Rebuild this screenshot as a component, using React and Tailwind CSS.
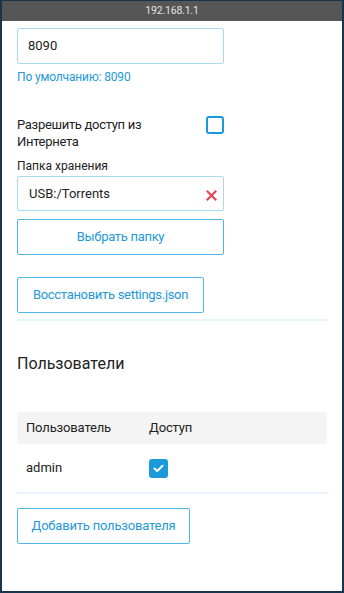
import React from "react";

export default function App() {
  return (
    <div className="w-[344px] h-[593px] bg-[#17354d] pl-[2px] pr-[2px] pt-[1px] pb-[2px] flex flex-col" style={{ fontFamily: "Roboto, 'Noto Sans', sans-serif" }}>
      <div className="h-[20px] bg-[#565656] text-[#e2e2e2] text-[10.5px] tracking-[-0.2px] flex items-center justify-center shrink-0">192.168.1.1</div>
      <div className="flex-1 bg-white pl-[15px] pr-[15px] text-[#222] overflow-hidden">
        <div className="mt-[7px] w-[207px] h-[36px] border-[1.5px] border-[#a9dcf3] rounded-[2px] flex items-center pl-[10px] text-[13px]">8090</div>
        <div className="mt-[5px] text-[12px] leading-[16px] tracking-[-0.15px] text-[#2499d6]">По умолчанию: 8090</div>
        <div className="mt-[31px] w-[207px] flex items-start justify-between">
          <div className="w-[180px] text-[13px] leading-[17px] tracking-[-0.3px]">Разрешить доступ из Интернета</div>
          <div className="w-[18px] h-[18px] border-2 border-[#1a9ad8] rounded-[3px]" />
        </div>
        <div className="mt-[8px] text-[12px] leading-[17px]">Папка хранения</div>
        <div className="mt-[1px] w-[207px] h-[35px] border-[1.5px] border-[#a9dcf3] rounded-[2px] flex items-center justify-between pl-[11px] pr-[6px] text-[13px]">
          <span>USB:/Torrents</span>
          <svg width="11" height="11" viewBox="0 0 11 11" className="mt-[3px]">
            <path d="M1.5 1.5 L9.5 9.5 M9.5 1.5 L1.5 9.5" stroke="#e8404f" strokeWidth="2" strokeLinecap="square" />
          </svg>
        </div>
        <button className="mt-[8px] w-[207px] h-[36px] border-[1.5px] border-[#4fb5e8] rounded-[2px] text-[13px] tracking-[-0.3px] text-[#2499d6] flex items-center justify-center">Выбрать папку</button>
        <button className="mt-[22px] w-[187px] h-[36px] border-[1.5px] border-[#4fb5e8] rounded-[2px] text-[13px] tracking-[-0.3px] text-[#2499d6] flex items-center justify-center">Восстановить settings.json</button>
        <div className="mt-[6px] w-[310px] h-[2px] bg-[#e8f4fb]" />
        <div className="mt-[32px] text-[16px] leading-[22px] text-[#222]">Пользователи</div>
        <div className="mt-[37px] w-[310px]">
          <div className="h-[32px] bg-[#f4f4f4] flex items-center text-[13px] tracking-[-0.15px]">
            <div className="w-[132px] pl-[9px]">Пользователь</div>
            <div>Доступ</div>
          </div>
          <div className="h-[48px] flex items-center text-[13px]">
            <div className="w-[132px] pl-[9px]">admin</div>
            <div className="w-[19px] h-[19px] bg-[#1a9ad8] rounded-[3px] flex items-center justify-center">
              <svg width="11" height="9" viewBox="0 0 11 9">
                <path d="M1.5 4.5 L4.2 7 L9.5 1.8" stroke="white" strokeWidth="2" fill="none" strokeLinecap="round" strokeLinejoin="round" />
              </svg>
            </div>
          </div>
          <div className="h-[2px] bg-[#e8f4fb]" />
        </div>
        <button className="mt-[14px] w-[173px] h-[36px] border-[1.5px] border-[#4fb5e8] rounded-[2px] text-[13px] tracking-[-0.2px] text-[#2499d6] flex items-center justify-center">Добавить пользователя</button>
      </div>
    </div>
  );
}
